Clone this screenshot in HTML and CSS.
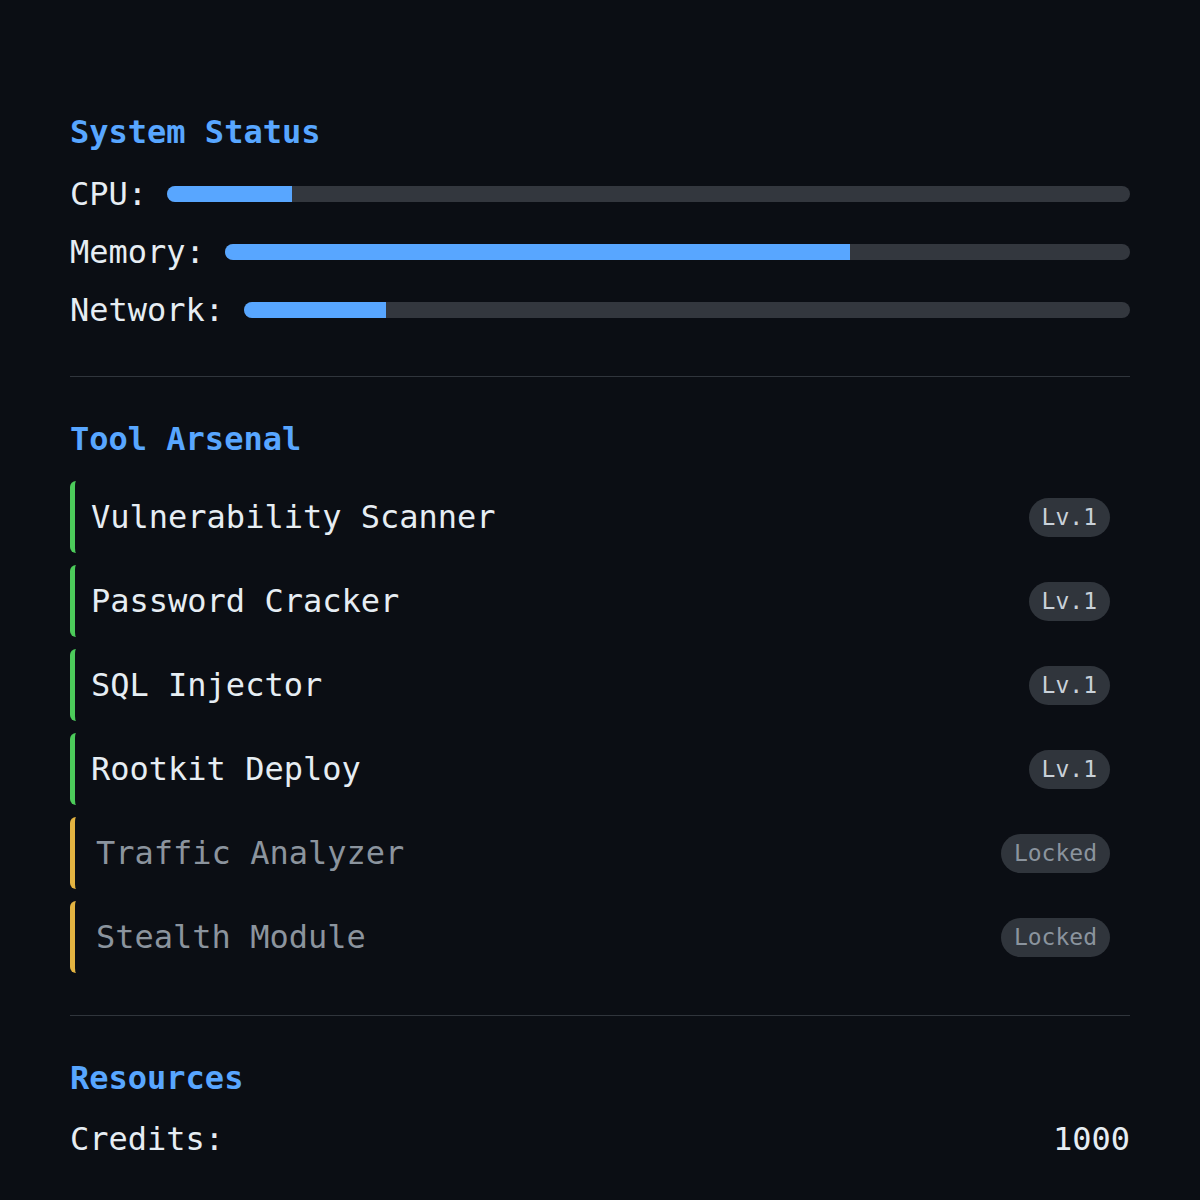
FILE: index.html
```html
<!DOCTYPE html>
<html lang="en">
<head>
  <meta charset="UTF-8">
  <meta name="viewport" content="width=device-width, initial-scale=1.0">
  <title>Hacker Console</title>
  <link rel="stylesheet" href="styles.css">
</head>

<body>
  <div class="panel">

    <section class="section stats">
      <h2>System Status</h2>
      <div class="stat">
        <span class="stat-label">CPU:</span>
        <div class="bar"><div class="bar-fill" style="width: 13%"></div></div>
      </div>
      <div class="stat">
        <span class="stat-label">Memory:</span>
        <div class="bar"><div class="bar-fill" style="width: 69.1%"></div></div>
      </div>
      <div class="stat">
        <span class="stat-label">Network:</span>
        <div class="bar"><div class="bar-fill" style="width: 16%"></div></div>
      </div>
    </section>

    <section class="section tools">
      <h2>Tool Arsenal</h2>
      <ul class="tool-list">
        <li class="tool">
          <span class="tool-name">Vulnerability Scanner</span>
          <span class="badge">Lv.1</span>
        </li>
        <li class="tool">
          <span class="tool-name">Password Cracker</span>
          <span class="badge">Lv.1</span>
        </li>
        <li class="tool">
          <span class="tool-name">SQL Injector</span>
          <span class="badge">Lv.1</span>
        </li>
        <li class="tool">
          <span class="tool-name">Rootkit Deploy</span>
          <span class="badge">Lv.1</span>
        </li>
        <li class="tool locked">
          <span class="tool-name">Traffic Analyzer</span>
          <span class="badge">Locked</span>
        </li>
        <li class="tool locked">
          <span class="tool-name">Stealth Module</span>
          <span class="badge">Locked</span>
        </li>
      </ul>
    </section>

    <section class="section resources">
      <h2>Resources</h2>
      <div class="resource">
        <span>Credits:</span>
        <span id="credits">1000</span>
      </div>
    </section>

  </div>
</body>
</html>
```

FILE: styles.css
```css
body {
  margin: 0;
  background-color: #0b0e14;
  color: #e6edf3;
  font-family: "DejaVu Sans Mono", "Liberation Mono", monospace;
  font-size: 32px;
}

.panel {
  padding: 70px 70px 0;
}

.section {
  padding: 42px 0 42px;
  border-top: 1px solid #30353c;
}

.section:first-child {
  border-top: none;
}

h2 {
  margin: 0 0 22px;
  height: 40px;
  line-height: 40px;
  font-size: 32px;
  font-weight: bold;
  color: #58a6ff;
}

/* system status bars */
.stats {
  padding-bottom: 46px;
}

.stat {
  display: flex;
  align-items: center;
  gap: 20px;
  height: 40px;
  margin-bottom: 18px;
}

.stat:last-child {
  margin-bottom: 0;
}

.stat-label {
  line-height: 40px;
}

.bar {
  flex: 1;
  height: 16px;
  border-radius: 8px;
  background-color: #33373e;
  overflow: hidden;
}

.bar-fill {
  height: 100%;
  background-color: #58a6ff;
}

/* tools */
.tool-list {
  list-style: none;
  margin: 0;
  padding: 0;
  display: flex;
  flex-direction: column;
  gap: 12px;
}

.tool {
  display: flex;
  align-items: center;
  justify-content: space-between;
  height: 72px;
  box-sizing: border-box;
  padding: 0 20px 0 16px;
  border-left: 5px solid #4ccb5a;
  border-radius: 6px;
}

.tool.locked {
  border-left-color: #e3b341;
  padding-left: 21px;
}

.tool.locked .tool-name {
  color: #8b949e;
}

.badge {
  height: 39px;
  line-height: 39px;
  padding: 0 13px;
  border-radius: 20px;
  background-color: #30353c;
  color: #c9d1d9;
  font-size: 23px;
}

.tool.locked .badge {
  color: #8b949e;
}

/* resources */
.resource {
  display: flex;
  justify-content: space-between;
  height: 40px;
  line-height: 40px;
  margin-top: -1px;
}
```
